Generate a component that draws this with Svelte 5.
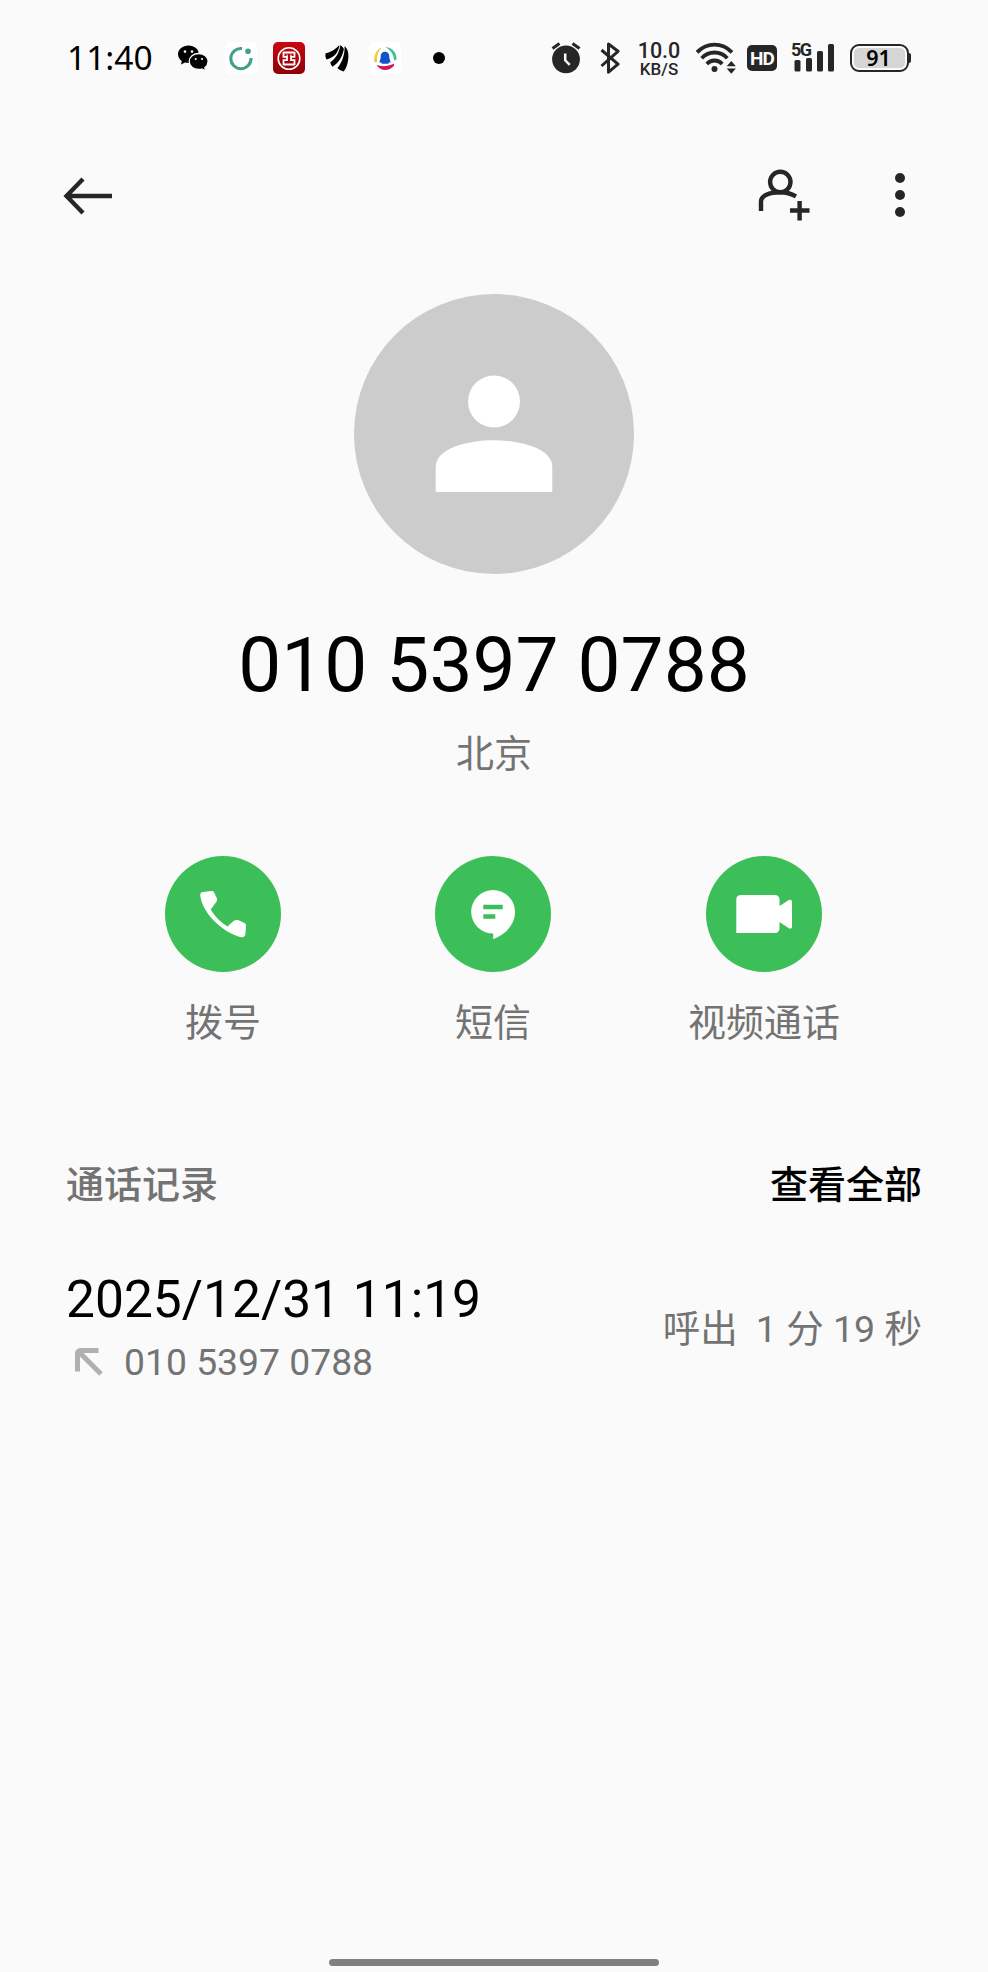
<script>
  const number = "010 5397 0788";
  const region = "北京";

  const actions = [
    { id: "dial", label: "拨号" },
    { id: "sms", label: "短信" },
    { id: "video", label: "视频通话" }
  ];

  const calls = [
    { id: 1, time: "2025/12/31 11:19", number, type: "呼出", duration: "1 分 19 秒" }
  ];
</script>

<div class="screen">
  <div class="status">
    <span class="clock">11:40</span>
    <div class="notices">
      <svg width="32" height="32" viewBox="0 0 32 32">
        <path d="M11.5 3.5C5.800 3.500 1 7.300 1 12.200c0 2.700 1.500 5.200 3.800 6.700L4 22.600l4-2.100c1.100.3 2.300.4 3.500.4 5.800 0 10.400-3.800 10.400-8.700S17.300 3.500 11.500 3.500z" />
        <path d="M21.700 11.500c-5.300 0-9.500 3.500-9.500 8s4.200 8 9.500 8c1.100 0 2.200-.2 3.200-.5l3.700 2.100-.8-3.400c2.100-1.500 3.300-3.700 3.300-6.200 0-4.500-4.200-8-9.400-8z" stroke="#fafafa" stroke-width="1.300" />
        <g fill="#fafafa">
          <circle cx="8" cy="9.600" r="1.300" /><circle cx="15" cy="9.600" r="1.300" />
          <circle cx="18.700" cy="17" r="1.100" /><circle cx="25" cy="17" r="1.100" />
        </g>
      </svg>
      <svg width="32" height="32" viewBox="0 0 32 32">
        <rect width="32" height="32" rx="6" fill="#fff" />
        <path d="M17 6.500A10.100 10.100 0 1 0 26 16" fill="none" stroke="#3fa08a" stroke-width="3" />
        <circle cx="23" cy="9.300" r="2.800" fill="#3fa08a" />
      </svg>
      <svg width="32" height="32" viewBox="0 0 32 32">
        <defs>
          <linearGradient id="bank" x2="0" y2="1">
            <stop stop-color="#ca0610" />
            <stop offset="1" stop-color="#8c0208" />
          </linearGradient>
        </defs>
        <rect width="32" height="32" rx="5" fill="url(#bank)" />
        <g fill="none" stroke="#fff">
          <circle cx="16" cy="16.500" r="10.800" stroke-width="1.600" />
          <path d="M10.300 10.500h11.400M10.300 22.500h11.400M10.500 10v4.800H14v3.400h-3.500V23M21.500 10v4.800H18v3.400h3.500V23M13.500 13.500h1.200M17.300 13.500h1.200" stroke-width="1.800" />
        </g>
      </svg>
      <svg width="32" height="32" viewBox="0 0 32 32">
        <path d="M4.500 11.500C9.500 10.500 14.500 7 18.500 3c-1 7-4.500 12-13 14.500-1-2-1.300-4-1-6z" />
        <path d="M19.300 3.300c1.600 1 3.100 2.400 3.600 3.800C21.500 15 17.500 21 11.600 24.700c-1.200-1.300-2-2.700-2.300-4.500C15 16.500 18.300 10.500 19.300 3.300z" />
        <path d="M23.600 4c3 3 4 6.300 3.800 11-.4 6-1.600 10.500-4.700 14.600-2.800-.7-5-2-6.300-3.500C21 20.500 24 12.500 23.600 4z" />
      </svg>
      <svg width="32" height="32" viewBox="0 0 32 32">
        <rect width="32" height="32" rx="6" fill="#fff" />
        <path d="M13.500 5C8 7 4.800 12 5.300 20c1 .7 2 .4 2.800-.3C7.500 13 9.500 8.500 13.500 5z" fill="#efc93c" />
        <path d="M16.500 5C23.500 5.500 28 11 27.500 17.500l-2.300 1C24.500 12 21.500 8 16.500 5z" fill="#3fbf9a" />
        <path d="M7.500 23c5 1.800 11 1.500 17.300-1.300l.4 1.800C20 29.500 12 29.800 7.500 23z" fill="#d3175f" />
        <path d="M16 9.800c-3 0-4.300 2.200-4.300 5.200 0 2-1.200 3.600-1.200 5.200 0 1 .8.500 1.400.1l1 1.400h6.300l1-1.400c.6.400 1.300.8 1.300-.1 0-1.600-1.200-3.200-1.200-5.200 0-3-1.300-5.200-4.300-5.200z" fill="#1253cb" />
      </svg>
      <i class="more-dot"></i>
    </div>

    <div class="system">
      <svg width="30" height="32" viewBox="0 0 30 32">
        <circle cx="15" cy="17.300" r="13.900" />
        <path d="M1.500 6.500 8.500 1.500M28.500 6.500 21.500 1.500" class="line" />
        <path d="M14.200 11.500v6.800l4.500 4.500" fill="none" stroke="#fafafa" stroke-width="2.500" />
      </svg>
      <svg class="bluetooth" width="20" height="32" viewBox="0 0 20 32">
        <path d="M1.500 8 18 22.200l-9.500 8V2l9.500 7.300L1.500 24" class="line" stroke-linejoin="round" />
      </svg>
      <div class="speed">
        <span>10.0</span>
        <small>KB/S</small>
      </div>
      <svg class="wifi" width="40" height="32" viewBox="0 0 40 32">
        <g fill="none" stroke="#262626" stroke-width="3.800">
          <path d="M1 10.300C11 .1 26 .1 36 10.300" />
          <path d="M5.700 16.200c7.200-7.600 18.400-7.600 25.600 0" />
          <path d="M10.800 22c4.300-4.700 11.100-4.700 15.400 0" />
        </g>
        <circle cx="18.500" cy="27" r="3" />
        <path d="M30.700 24.300 35.300 19l4.600 5.300zM30.700 26.500l4.600 5.300 4.600-5.300z" />
      </svg>
      <span class="hd">HD</span>
      <div class="signal">
        <span>5G</span>
        <svg width="44" height="32" viewBox="0 0 44 32">
          <rect x="3.500" y="18" width="6" height="11.500" rx="1.500" />
          <rect x="15" y="16" width="6" height="13.500" rx="1.500" />
          <rect x="26" y="9" width="6" height="20.500" rx="1.500" />
          <rect x="37" y="2" width="6" height="27.500" rx="1.500" />
        </svg>
      </div>
      <div class="battery"><span>91</span></div>
    </div>
  </div>

  <header>
    <button class="icon" type="button" aria-label="返回">
      <svg width="50" height="50" viewBox="0 0 50 50">
        <path d="M20 8 3.500 25 20 42M3.500 25H49" fill="none" stroke="#262626" stroke-width="4.400" />
      </svg>
    </button>
    <div class="tools">
      <button class="icon" type="button" aria-label="新建联系人">
        <svg width="54" height="54" viewBox="0 0 54 54">
          <g fill="none" stroke="#262626" stroke-width="4.400">
            <circle cx="23.300" cy="15" r="10.200" />
            <path d="M4 44V34.500C4 29 12 25.200 23 25.200c6.500 0 11.500 1.600 16 4.200" />
            <path d="M42.600 34v19.500M33 43.500h19.500" />
          </g>
        </svg>
      </button>
      <button class="icon" type="button" aria-label="更多">
        <svg width="12" height="54" viewBox="0 0 12 54">
          <circle cx="6" cy="11" r="5" />
          <circle cx="6" cy="28" r="5" />
          <circle cx="6" cy="45" r="5" />
        </svg>
      </button>
    </div>
  </header>

  <section class="profile">
    <svg class="avatar" width="280" height="280" viewBox="0 0 280 280">
      <circle cx="140" cy="140" r="140" fill="#ccc" />
      <g fill="#fff">
        <circle cx="140" cy="107.500" r="26" />
        <path d="M81.700 198v-25C81.700 154 114 146.200 140 146.200s58.300 7.800 58.300 26.800v25z" />
      </g>
    </svg>
    <h1>{number}</h1>
    <p>{region}</p>
  </section>

  <section class="actions">
    {#each actions as action (action.id)}
      <button type="button">
        <svg width="116" height="116" viewBox="0 0 116 116">
          <circle cx="58" cy="58" r="58" fill="#3cbf58" />
          {#if action.id === "dial"}
            <path d="M38 36 46.500 35.100c1.300-.1 2 .3 2.600 1.400l2.600 5.300c.6 1.400.5 3.200-.6 4.400L45.700 53.500c4 7 9.700 12.800 16.800 17l6-5.400c1.500-1.200 3.200-1.400 5-.8l5.500 2.400c1.500.7 2 1.600 2 3l-.6 8.500c-.2 2.200-1.800 3.200-3.800 3C60 78 37.500 58.500 35.200 39.500c-.2-2 .8-3.300 2.800-3.500z" fill="#fff" />
          {:else if action.id === "sms"}
            <path d="M58 34a22 21.700 0 0 1 22 22c0 13-10 22.500-21.800 27.300v-5.700A21.800 21.700 0 0 1 58 34z" fill="#fff" />
            <path d="M48.300 51h19.400M48.300 60.500h12" stroke="#3cbf58" stroke-width="4.300" />
          {:else}
            <path d="M34.500 39H69a4.500 4.500 0 0 1 4.500 4.500V50l9-5.800c1.800-1 3.500-.3 3.500 1.500v25c0 1.800-1.700 2.500-3.500 1.300L73.500 66v6.500A4.500 4.500 0 0 1 69 77H30.300V43.500A4.500 4.500 0 0 1 34.500 39z" fill="#fff" />
          {/if}
        </svg>
        <span>{action.label}</span>
      </button>
    {/each}
  </section>

  <section class="log">
    <div class="log-head">
      <h2>通话记录</h2>
      <button type="button">查看全部</button>
    </div>
    {#each calls as call (call.id)}
      <div class="call">
        <div>
          <div class="time">{call.time}</div>
          <div class="number">
            <svg width="28" height="28" viewBox="0 0 28 28">
              <path d="M2.500 23.500V5.500a3 3 0 0 1 3-3h18M3.500 3.500 26 26" fill="none" stroke="#b0b0b0" stroke-width="5" />
            </svg>
            <span>{call.number}</span>
          </div>
        </div>
        <div class="duration"><span>{call.type}</span><span>{call.duration}</span></div>
      </div>
    {/each}
  </section>

  <div class="home-bar"></div>
</div>

<style>
  :global(body) {
    background: #fafafa;
  }

  .screen {
    width: 988px;
    height: 1972px;
    box-sizing: border-box;
    overflow: hidden;
    display: flex;
    flex-direction: column;
    background: #fafafa;
    color: #000;
    font-family: Roboto, "Noto Sans CJK SC", sans-serif;
  }

  svg {
    display: block;
    flex: none;
  }

  button {
    padding: 0;
    border: none;
    background: none;
    color: inherit;
    font: inherit;
    cursor: pointer;
  }

  .status {
    height: 116px;
    padding: 0 77px 0 67px;
    display: flex;
    align-items: center;
  }

  .clock {
    width: 110px;
    font: 33.5px/1 "Noto Sans", sans-serif;
  }

  .notices {
    display: flex;
    align-items: center;
    gap: 16px;
  }

  .more-dot {
    width: 12px;
    height: 12px;
    margin-left: 16px;
    border-radius: 50%;
    background: #000;
  }

  .system {
    margin-left: auto;
    display: flex;
    align-items: center;
    color: #262626;
    fill: #262626;
  }

  .line {
    fill: none;
    stroke: #262626;
    stroke-width: 3;
  }

  .bluetooth {
    margin-left: 19px;
  }

  .speed {
    width: 46px;
    margin: 0 14px 0 16px;
    padding-top: 2px;
    display: grid;
    justify-items: center;
    font: 500 21.5px/20px Roboto, sans-serif;
  }

  .speed small {
    font-size: 17px;
    line-height: 17px;
  }

  .hd {
    width: 30px;
    height: 26px;
    margin-left: 11px;
    border-radius: 5px;
    background: #262626;
    color: #fafafa;
    text-align: center;
    font: 700 19px/27px Roboto, sans-serif;
    letter-spacing: -1px;
  }

  .signal {
    position: relative;
    margin-left: 14px;
  }

  .signal span {
    position: absolute;
    left: 0;
    top: 0;
    font: 700 18px/15px Roboto, sans-serif;
    letter-spacing: -1.5px;
  }

  .battery {
    position: relative;
    width: 59px;
    height: 28px;
    margin: 0 2px 0 15px;
    padding: 4px;
    box-sizing: border-box;
    border: 2px solid #262626;
    border-radius: 9px;
    color: #000;
  }

  .battery span {
    display: block;
    margin: -2px;
    border-radius: 5px;
    background: #d5d5d5;
    text-align: center;
    text-indent: -2px;
    font: 600 21.5px/20px "Noto Sans", sans-serif;
  }

  .battery::after {
    content: "";
    position: absolute;
    right: -4px;
    top: 7px;
    width: 2px;
    height: 10px;
    border-radius: 0 2px 2px 0;
    background: #262626;
  }

  header {
    height: 160px;
    padding: 0 82px 0 63px;
    display: flex;
    align-items: center;
    justify-content: space-between;
  }

  .tools {
    margin-bottom: 4px;
    display: flex;
    gap: 83px;
  }

  .tools svg {
    fill: #262626;
  }

  .profile {
    padding-top: 18px;
    display: flex;
    flex-direction: column;
    align-items: center;
  }

  h1 {
    margin: 47px 0 0;
    font-size: 76.6px;
    font-weight: 400;
    line-height: 88px;
  }

  .profile p {
    margin: 17px 0 0;
    color: #737373;
    font-size: 38px;
    line-height: 56px;
  }

  .actions {
    width: 812px;
    margin: 74px 0 0 88px;
    display: grid;
    grid-template-columns: 270px 270px 272px;
  }

  .actions button {
    display: flex;
    flex-direction: column;
    align-items: center;
    gap: 23px;
    color: #737373;
    font-size: 38px;
    line-height: 56px;
  }

  .log {
    padding: 0 66px;
  }

  .log-head {
    margin-top: 106px;
    display: flex;
    justify-content: space-between;
    font-size: 38px;
    line-height: 56px;
    font-weight: 500;
  }

  h2 {
    margin: 0;
    color: #737373;
    font: inherit;
  }

  .call {
    margin-top: 57px;
    display: flex;
    align-items: flex-start;
    justify-content: space-between;
  }

  .time {
    font-size: 51.5px;
    line-height: 60px;
  }

  .number {
    padding-left: 9px;
    display: flex;
    align-items: center;
    gap: 21px;
    color: #737373;
    font-size: 37.3px;
    line-height: 64px;
  }

  .duration {
    margin-top: 31px;
    display: flex;
    gap: 18px;
    color: #737373;
    font-size: 37.5px;
    line-height: 56px;
  }

  .home-bar {
    width: 330px;
    height: 7px;
    margin: auto auto 6px;
    border-radius: 4px;
    background: #808080;
  }
</style>
